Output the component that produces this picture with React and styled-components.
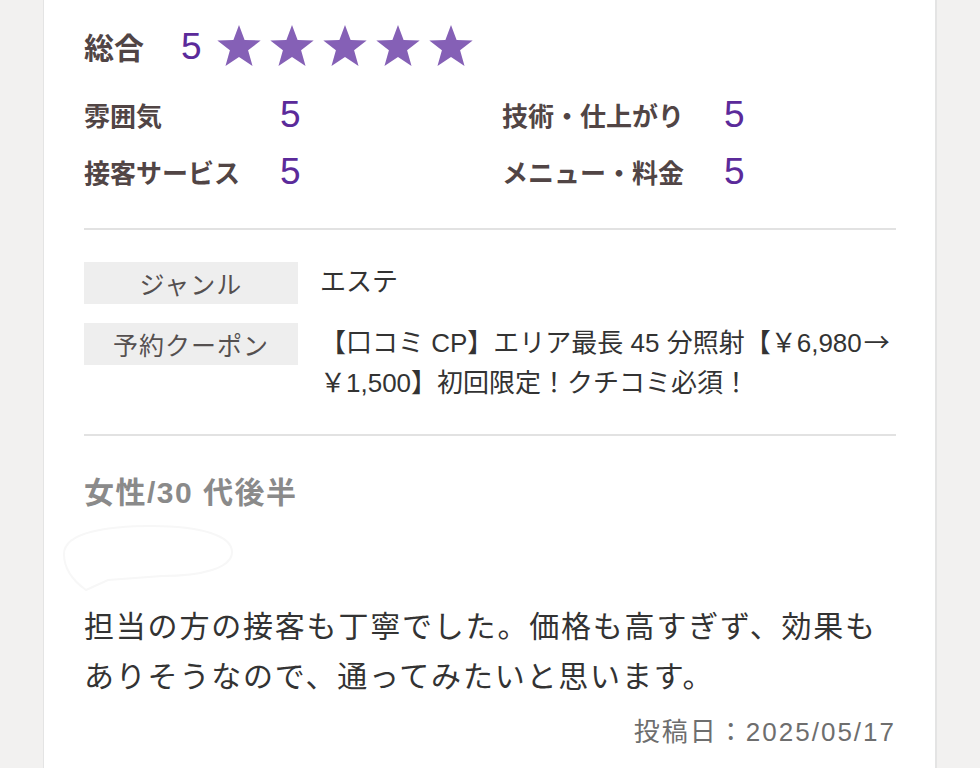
import React from "react";
import styled, { createGlobalStyle } from "styled-components";

const GlobalStyle = createGlobalStyle`
  body {
    margin: 0;
    background: #f2f1f0;
    font-family: "Noto Sans CJK JP", "Noto Sans", sans-serif;
  }
`;

const subScores = [
  { label: "雰囲気", score: 5, width: 196 },
  { label: "技術・仕上がり", score: 5, width: 222 },
  { label: "接客サービス", score: 5, width: 196 },
  { label: "メニュー・料金", score: 5, width: 222 },
];

function Star() {
  return (
    <svg width="44" height="41" viewBox="0.8 0.6 22.4 21.2">
      <polygon
        points="12,0.6 14.9,8.3 23.2,8.6 16.7,13.7 19,21.8 12,17.1 5,21.8 7.3,13.7 0.8,8.6 9.1,8.3"
        fill="#8560b6"
      />
    </svg>
  );
}

function App() {
  return (
    <Page>
      <GlobalStyle />
      <Card>
        <OverallRow>
          <OverallLabel>総合</OverallLabel>
          <Score $big>5</Score>
          <Stars>
            {[0, 1, 2, 3, 4].map((i) => (
              <Star key={i} />
            ))}
          </Stars>
        </OverallRow>

        <SubGrid>
          {subScores.map((s) => (
            <SubItem key={s.label}>
              <SubLabel $width={s.width}>{s.label}</SubLabel>
              <Score>{s.score}</Score>
            </SubItem>
          ))}
        </SubGrid>

        <Divider $top={28} />

        <InfoTable>
          <InfoLabel>ジャンル</InfoLabel>
          <InfoValue>エステ</InfoValue>
          <InfoLabel>予約クーポン</InfoLabel>
          <InfoValue>
            【口コミ CP】エリア最長 45 分照射【￥6,980<Arrow>→</Arrow>
            <br />
            ￥1,500】初回限定！クチコミ必須！
          </InfoValue>
        </InfoTable>

        <Divider $top={31} />

        <Author>女性/30 代後半</Author>

        <BubbleSlot>
          <svg width="200" height="76" viewBox="0 0 200 76">
            <path
              d="M22 36 C22 14 66 8 110 8 C160 8 190 18 190 34 C190 50 160 58 120 58 L66 62 L44 72 C30 62 22 50 22 36 Z"
              fill="none"
              stroke="#f7f7f7"
              strokeWidth="2"
            />
          </svg>
        </BubbleSlot>

        <Comment>
          担当の方の接客も丁寧でした。価格も高すぎず、効果もありそうなので、通ってみたいと思います。
        </Comment>

        <PostDate>投稿日：2025/05/17</PostDate>
      </Card>
    </Page>
  );
}

export default App;

const Page = styled.div`
  display: flex;
  justify-content: center;
  padding: 0 43px;
  min-height: 768px;
`;

const Card = styled.section`
  flex: 1;
  background: #ffffff;
  border-left: 1px solid #e4e4e4;
  border-right: 2px solid #e4e4e4;
  padding: 24px 39px 40px 40px;
  display: flex;
  flex-direction: column;
`;

const OverallRow = styled.div`
  display: flex;
  align-items: center;
  height: 44px;
`;

const OverallLabel = styled.span`
  font-size: 30px;
  font-weight: 700;
  color: #514545;
  width: 97px;
`;

const Score = styled.span`
  font-family: "Liberation Sans", Arial, sans-serif;
  font-size: 37px;
  line-height: 1;
  color: #5b2a9a;
  width: ${(p) => (p.$big ? "36px" : "auto")};
`;

const Stars = styled.div`
  display: flex;
  gap: 9px;
  margin-top: -2px;
`;

const SubGrid = styled.div`
  display: grid;
  grid-template-columns: 418px 1fr;
  grid-auto-rows: 57px;
  margin-top: 18px;
`;

const SubItem = styled.div`
  display: flex;
  align-items: center;
`;

const SubLabel = styled.span`
  width: ${(p) => p.$width}px;
  font-size: 26px;
  font-weight: 700;
  color: #514545;
`;

const Divider = styled.hr`
  border: none;
  height: 2px;
  background: #e2e2e2;
  margin: ${(p) => p.$top}px 0 0;
`;

const InfoTable = styled.div`
  display: grid;
  grid-template-columns: 214px minmax(0, 1fr);
  column-gap: 22px;
  row-gap: 19px;
  margin-top: 32px;
`;

const InfoLabel = styled.div`
  background: #eeeeee;
  height: 42px;
  display: flex;
  align-items: center;
  justify-content: center;
  font-size: 25px;
  color: #555050;
  letter-spacing: 1px;
`;

const InfoValue = styled.div`
  font-family: "Liberation Sans", "Noto Sans CJK JP", sans-serif;
  font-size: 26px;
  line-height: 40px;
  color: #333333;
  white-space: nowrap;
`;

const Arrow = styled.span`
  display: inline-block;
  font-family: "Noto Sans CJK JP", sans-serif;
  line-height: 1;
  margin-left: 2px;
`;

const Author = styled.div`
  margin-top: 37px;
  font-family: "Liberation Sans", "Noto Sans CJK JP", sans-serif;
  font-size: 30px;
  line-height: 40px;
  font-weight: 700;
  letter-spacing: 1.5px;
  color: #8a8a8a;
`;

const BubbleSlot = styled.div`
  height: 86px;
  margin-left: -42px;
  display: flex;
  align-items: center;
`;

const Comment = styled.p`
  margin: 0;
  font-size: 30px;
  line-height: 50px;
  letter-spacing: 1.8px;
  color: #333333;
`;

const PostDate = styled.div`
  margin-top: 15px;
  text-align: right;
  font-family: "Liberation Sans", "Noto Sans CJK JP", sans-serif;
  font-size: 26px;
  line-height: 36px;
  letter-spacing: 2px;
  color: #6e6e6e;
`;
